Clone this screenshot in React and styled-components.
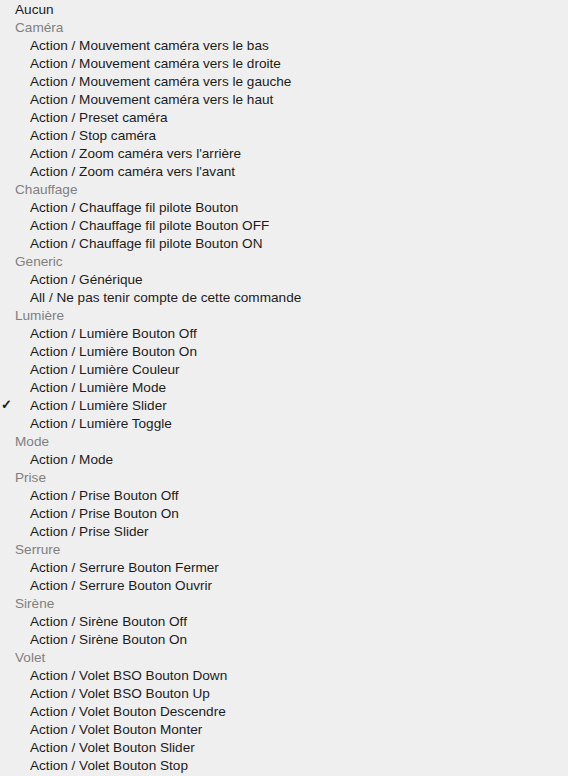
import React from 'react';
import styled, { createGlobalStyle } from 'styled-components';

const GlobalStyle = createGlobalStyle`
  html, body {
    margin: 0;
    padding: 0;
    background: #efefef;
  }
  body {
    font-family: "Liberation Sans", Arial, sans-serif;
    -webkit-font-smoothing: antialiased;
  }
`;

const Menu = styled.div`
  display: flex;
  flex-direction: column;
  width: 568px;
  height: 776px;
  overflow: hidden;
  background: #efefef;
`;

const Row = styled.div`
  position: relative;
  display: flex;
  align-items: center;
  height: 18px;
  padding-left: ${props => (props.indent ? '30px' : '15px')};
  font-size: 13.6px;
  color: ${props => (props.header ? '#7f7f7f' : '#1c1c1c')};
  white-space: nowrap;
`;

const Check = styled.span`
  position: absolute;
  left: 1px;
  top: 0;
  line-height: 18px;
  font-size: 13px;
  font-weight: bold;
  color: #1c1c1c;
`;

const groups = [
  ['Caméra', [
    'Action / Mouvement caméra vers le bas',
    'Action / Mouvement caméra vers le droite',
    'Action / Mouvement caméra vers le gauche',
    'Action / Mouvement caméra vers le haut',
    'Action / Preset caméra',
    'Action / Stop caméra',
    "Action / Zoom caméra vers l'arrière",
    "Action / Zoom caméra vers l'avant",
  ]],
  ['Chauffage', [
    'Action / Chauffage fil pilote Bouton',
    'Action / Chauffage fil pilote Bouton OFF',
    'Action / Chauffage fil pilote Bouton ON',
  ]],
  ['Generic', [
    'Action / Générique',
    'All / Ne pas tenir compte de cette commande',
  ]],
  ['Lumière', [
    'Action / Lumière Bouton Off',
    'Action / Lumière Bouton On',
    'Action / Lumière Couleur',
    'Action / Lumière Mode',
    'Action / Lumière Slider',
    'Action / Lumière Toggle',
  ]],
  ['Mode', ['Action / Mode']],
  ['Prise', [
    'Action / Prise Bouton Off',
    'Action / Prise Bouton On',
    'Action / Prise Slider',
  ]],
  ['Serrure', [
    'Action / Serrure Bouton Fermer',
    'Action / Serrure Bouton Ouvrir',
  ]],
  ['Sirène', [
    'Action / Sirène Bouton Off',
    'Action / Sirène Bouton On',
  ]],
  ['Volet', [
    'Action / Volet BSO Bouton Down',
    'Action / Volet BSO Bouton Up',
    'Action / Volet Bouton Descendre',
    'Action / Volet Bouton Monter',
    'Action / Volet Bouton Slider',
    'Action / Volet Bouton Stop',
  ]],
];

const selected = 'Action / Lumière Slider';

function App() {
  return (
    <>
      <GlobalStyle />
      <Menu>
        <Row>Aucun</Row>
        {groups.map(([name, items]) => (
          <React.Fragment key={name}>
            <Row header>{name}</Row>
            {items.map(item => (
              <Row indent key={item}>
                {item === selected && <Check>✓</Check>}
                {item}
              </Row>
            ))}
          </React.Fragment>
        ))}
      </Menu>
    </>
  );
}

export default App;
